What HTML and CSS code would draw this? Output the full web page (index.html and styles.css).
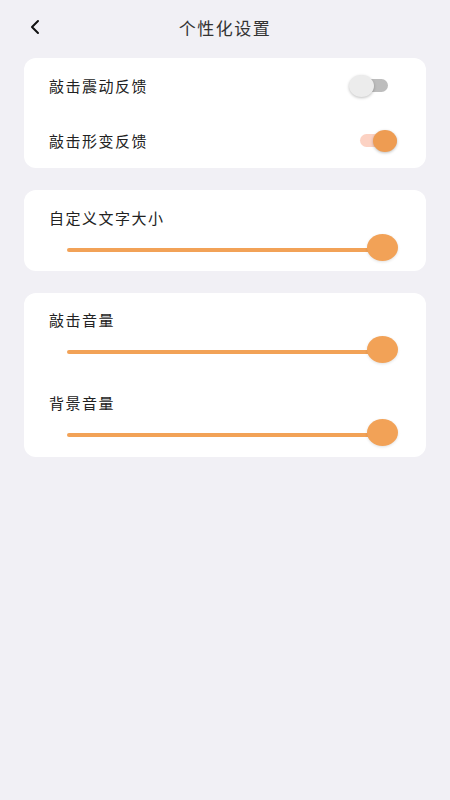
FILE: index.html
```html
<!DOCTYPE html>
<html lang="zh-CN">
<head>
    <meta charset="UTF-8">
    <meta name="viewport" content="width=device-width, initial-scale=1.0">
    <title>个性化设置</title>
    <link rel="stylesheet" href="styles.css">
</head>
<body>

    <div class="header">
        <svg class="back" width="14" height="16" viewBox="0 0 14 16">
            <path d="M10 2 L4 8 L10 14" fill="none" stroke="#111" stroke-width="2" stroke-linecap="round" stroke-linejoin="round"/>
        </svg>
        <h1>个性化设置</h1>
    </div>

    <div class="card">
        <div class="row">
            <span class="label">敲击震动反馈</span>
            <div class="switch"><span class="track"></span><span class="thumb"></span></div>
        </div>
        <div class="row">
            <span class="label">敲击形变反馈</span>
            <div class="switch on"><span class="track"></span><span class="thumb"></span></div>
        </div>
    </div>

    <div class="card slider-card">
        <div class="label">自定义文字大小</div>
        <div class="slider"><span class="bar"></span><span class="knob"></span></div>
    </div>

    <div class="card slider-card volume">
        <div class="label">敲击音量</div>
        <div class="slider"><span class="bar"></span><span class="knob"></span></div>
        <div class="label second">背景音量</div>
        <div class="slider"><span class="bar"></span><span class="knob"></span></div>
    </div>

</body>
</html>
```

FILE: styles.css
```css
body {
    font-family: "Noto Sans CJK SC", "Noto Sans", sans-serif;
    background-color: #f1f0f5;
    color: #222;
    margin: 0;
    padding: 0 24px;
}

.header {
    height: 54px;
    padding-bottom: 4px;
    display: flex;
    align-items: center;
    justify-content: center;
    position: relative;
}

.header .back {
    position: absolute;
    left: 4px;
    top: 19px;
}

h1 {
    margin: 0;
    font-size: 17px;
    font-weight: normal;
    letter-spacing: 1.5px;
    color: #333;
}

.card {
    background-color: white;
    border-radius: 12px;
    margin-bottom: 22px;
}

.row {
    height: 55px;
    display: flex;
    align-items: center;
    justify-content: space-between;
    padding: 0 29px 0 25px;
}

.label {
    font-size: 15px;
    letter-spacing: 1.5px;
    line-height: 20px;
}

.switch {
    width: 48px;
    height: 24px;
    display: flex;
    align-items: center;
}

.switch .track {
    width: 32px;
    height: 13px;
    border-radius: 7px;
    background-color: #bdbdbd;
    margin-left: 7px;
}

.switch .thumb {
    width: 25px;
    height: 22px;
    border-radius: 50%;
    background-color: #ececec;
    box-shadow: 0 1px 3px rgba(0, 0, 0, 0.25);
    margin-left: -39px;
}

.switch.on .track {
    width: 37px;
    background-color: #fcd2c3;
    margin-left: 11px;
}

.switch.on .thumb {
    width: 24px;
    background-color: #ee9c52;
    margin-left: -24px;
}

.slider-card {
    padding: 18px 28px 9px 25px;
}

.slider-card.volume {
    padding-top: 17px;
    padding-bottom: 10px;
}

.slider {
    height: 30px;
    margin-top: 4px;
    display: flex;
    align-items: center;
    padding-left: 18px;
}

.slider .bar {
    flex: 1;
    height: 4px;
    border-radius: 2px;
    background-color: #f2a257;
    margin-top: 5px;
}

.slider .knob {
    width: 31px;
    height: 27px;
    border-radius: 50%;
    background-color: #f2a257;
    box-shadow: 0 1px 3px rgba(0, 0, 0, 0.12);
    margin-left: -12px;
}

.label.second {
    margin-top: 29px;
}
```
